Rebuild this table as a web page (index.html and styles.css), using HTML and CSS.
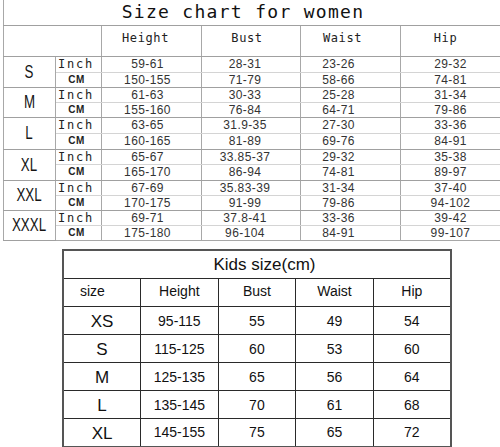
FILE: index.html
```html
<!DOCTYPE html>
<html>
<head>
<meta charset="utf-8">
<link rel="stylesheet" href="styles.css">
</head>
<body>
<table class="women">
  <colgroup>
    <col class="c-size"><col class="c-unit"><col class="c-h"><col class="c-b"><col class="c-w"><col class="c-hip">
  </colgroup>
  <tr class="title-row"><td colspan="6" class="title">Size chart for women</td></tr>
  <tr class="head-row">
    <td colspan="2"></td>
    <td class="hd hd-h">Height</td><td class="hd hd-b">Bust</td><td class="hd hd-w">Waist</td><td class="hd hd-hip">Hip</td>
  </tr>
  <tr class="r16 inch"><td rowspan="2" class="sz"><span>S</span></td><td class="u-in">Inch</td><td class="v vh">59-61</td><td class="v vb">28-31</td><td class="v vw">23-26</td><td class="v vhip">29-32</td></tr>
  <tr class="r15 cm"><td class="u-cm">CM</td><td class="v vh">150-155</td><td class="v vb">71-79</td><td class="v vw">58-66</td><td class="v vhip">74-81</td></tr>
  <tr class="r15 inch"><td rowspan="2" class="sz"><span>M</span></td><td class="u-in">Inch</td><td class="v vh">61-63</td><td class="v vb">30-33</td><td class="v vw">25-28</td><td class="v vhip">31-34</td></tr>
  <tr class="r15 cm"><td class="u-cm">CM</td><td class="v vh">155-160</td><td class="v vb">76-84</td><td class="v vw">64-71</td><td class="v vhip">79-86</td></tr>
  <tr class="r16 inch"><td rowspan="2" class="sz"><span>L</span></td><td class="u-in">Inch</td><td class="v vh">63-65</td><td class="v vb">31.9-35</td><td class="v vw">27-30</td><td class="v vhip">33-36</td></tr>
  <tr class="r16 cm"><td class="u-cm">CM</td><td class="v vh">160-165</td><td class="v vb">81-89</td><td class="v vw">69-76</td><td class="v vhip">84-91</td></tr>
  <tr class="r15 inch"><td rowspan="2" class="sz"><span>XL</span></td><td class="u-in">Inch</td><td class="v vh">65-67</td><td class="v vb">33.85-37</td><td class="v vw">29-32</td><td class="v vhip">35-38</td></tr>
  <tr class="r16 cm"><td class="u-cm">CM</td><td class="v vh">165-170</td><td class="v vb">86-94</td><td class="v vw">74-81</td><td class="v vhip">89-97</td></tr>
  <tr class="r15 inch"><td rowspan="2" class="sz"><span>XXL</span></td><td class="u-in">Inch</td><td class="v vh">67-69</td><td class="v vb">35.83-39</td><td class="v vw">31-34</td><td class="v vhip">37-40</td></tr>
  <tr class="r15 cm"><td class="u-cm">CM</td><td class="v vh">170-175</td><td class="v vb">91-99</td><td class="v vw">79-86</td><td class="v vhip">94-102</td></tr>
  <tr class="r15 inch"><td rowspan="2" class="sz"><span>XXXL</span></td><td class="u-in">Inch</td><td class="v vh">69-71</td><td class="v vb">37.8-41</td><td class="v vw">33-36</td><td class="v vhip">39-42</td></tr>
  <tr class="r15 cm last"><td class="u-cm">CM</td><td class="v vh">175-180</td><td class="v vb">96-104</td><td class="v vw">84-91</td><td class="v vhip">99-107</td></tr>
</table>

<table class="kids">
  <tr class="k-title"><td colspan="5">Kids size(cm)</td></tr>
  <tr class="k-head"><td class="k-size">size</td><td>Height</td><td>Bust</td><td>Waist</td><td>Hip</td></tr>
  <tr><td class="k-lab">XS</td><td>95-115</td><td>55</td><td>49</td><td>54</td></tr>
  <tr><td class="k-lab">S</td><td>115-125</td><td>60</td><td>53</td><td>60</td></tr>
  <tr><td class="k-lab">M</td><td>125-135</td><td>65</td><td>56</td><td>64</td></tr>
  <tr><td class="k-lab">L</td><td>135-145</td><td>70</td><td>61</td><td>68</td></tr>
  <tr><td class="k-lab">XL</td><td>145-155</td><td>75</td><td>65</td><td>72</td></tr>
</table>
</body>
</html>
```

FILE: styles.css
```css
html, body {
  margin: 0;
  padding: 0;
  background: #fff;
}
body {
  width: 500px;
  height: 447px;
  overflow: hidden;
  font-family: "Liberation Sans", Arial, sans-serif;
}

/* ---------- women table ---------- */
.women {
  margin-left: 3px;
  border-collapse: collapse;
  table-layout: fixed;
  width: 497px;
  border-left: 1px solid #a8a8a8;
  border-right: 1px solid #a8a8a8;
}
.women td {
  padding: 0;
  border-left: 1px solid #a8a8a8;
  border-right: 1px solid #a8a8a8;
  text-align: center;
  vertical-align: middle;
  line-height: 1;
}
.c-size { width: 52px; }
.c-unit { width: 46px; }
.c-h { width: 100px; }
.c-b { width: 99px; }
.c-w { width: 100px; }
.c-hip { width: 100px; }

.title-row { height: 25px; }
.title-row td {
  border-bottom: 1px solid #a0a0a0;
}
.title {
  font-family: "DejaVu Sans Mono", monospace;
  font-size: 18px;
  letter-spacing: 1.3px;
  color: #111;
  padding-right: 18px !important;
}
.head-row { height: 31px; }
.head-row td {
  border-bottom: 1px solid #a0a0a0;
  vertical-align: top;
  padding-top: 6px;
}
.hd {
  font-family: "DejaVu Sans Mono", monospace;
  font-size: 12px;
  letter-spacing: 0.6px;
  color: #222;
}
.head-row .hd-h { padding-right: 12px; }
.head-row .hd-b { padding-right: 8px; }
.head-row .hd-w { padding-right: 16px; }
.head-row .hd-hip { padding-right: 10px; }

.r16 { height: 16px; }
.r15 { height: 15px; }
tr.inch td { border-bottom: 1px solid #d4d4d4; }
tr.cm td { border-bottom: 1px solid #a0a0a0; }
tr.inch td.sz { border-bottom: 1px solid #a0a0a0; }
tr.cm.last td { border-bottom: 1px solid #a8a8a8; }

.sz {
  font-size: 18px;
  color: #151515;
}
.sz span {
  display: inline-block;
  transform: scaleX(0.74);
}
.u-in {
  font-family: "DejaVu Sans Mono", monospace;
  font-size: 12px;
  letter-spacing: 1.8px;
  color: #222;
  text-align: left !important;
  padding-left: 2px !important;
}
.u-cm {
  font-size: 10px;
  font-weight: bold;
  letter-spacing: 0.5px;
  color: #222;
  padding-right: 4px !important;
}
.v {
  font-size: 12px;
  letter-spacing: 0.4px;
  color: #333;
}
.vh { padding-right: 8px !important; }
.vb { padding-right: 12px !important; }
.vw { padding-right: 24px !important; }
.vhip { padding-right: 0; }

/* ---------- kids table ---------- */
.kids {
  margin-top: 8px;
  margin-left: 62px;
  border-collapse: collapse;
  table-layout: fixed;
  width: 390px;
  border: 2px solid #555;
}
.kids td {
  width: 78px;
  height: 28px;
  box-sizing: border-box;
  padding: 0;
  border: 1px solid #2a2a2a;
  text-align: center;
  vertical-align: middle;
  font-size: 14px;
  color: #111;
  line-height: 1;
}
.k-title td {
  height: 29px;
  font-size: 17px;
  padding-left: 15px;
}
.k-head td { padding-bottom: 3px; }
.kids td.k-size {
  text-align: left;
  padding-left: 16px;
}
.kids td.k-lab {
  font-size: 17px;
  padding-top: 2px;
}
```
